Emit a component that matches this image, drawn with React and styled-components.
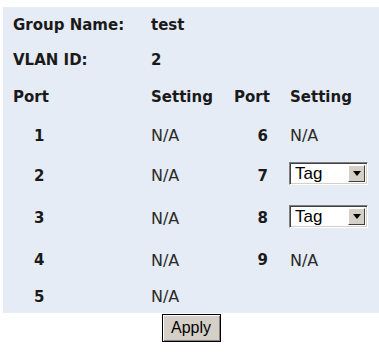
import React from "react";
import styled, { createGlobalStyle } from "styled-components";

const GlobalStyle = createGlobalStyle`
  html, body {
    margin: 0;
    padding: 0;
    background: #ffffff;
  }
`;

const rows = [
  { left: 1, right: 6, setting: null },
  { left: 2, right: 7, setting: "Tag" },
  { left: 3, right: 8, setting: "Tag" },
  { left: 4, right: 9, setting: null },
  { left: 5, right: null, setting: null },
];

export default function App() {
  return (
    <Page>
      <GlobalStyle />
      <Panel>
        <Label>Group Name:</Label>
        <Value>test</Value>
        <Label>VLAN ID:</Label>
        <Value>2</Value>

        <Label>Port</Label>
        <Head>Setting</Head>
        <Head>Port</Head>
        <Head>Setting</Head>

        {rows.map((r) => (
          <React.Fragment key={r.left}>
            <PortNum>{r.left}</PortNum>
            <NA>N/A</NA>
            <PortNum $right>{r.right}</PortNum>
            <Cell>
              {r.right === null ? null : r.setting ? (
                <SelectBox>
                  <Select defaultValue={r.setting}>
                    <option>Tag</option>
                    <option>Untag</option>
                  </Select>
                  <ArrowButton>
                    <svg width="8" height="5" viewBox="0 0 8 5">
                      <path d="M0 0h8L4 5z" fill="#000" />
                    </svg>
                  </ArrowButton>
                </SelectBox>
              ) : (
                <NA>N/A</NA>
              )}
            </Cell>
          </React.Fragment>
        ))}
      </Panel>
      <Footer>
        <ApplyButton>Apply</ApplyButton>
      </Footer>
    </Page>
  );
}

const Page = styled.div`
  padding: 7px 0 0 3px;
  width: 379px;
  box-sizing: border-box;
`;

const Panel = styled.div`
  display: grid;
  grid-template-columns: 148px 83px 56px 1fr;
  grid-template-rows: 35px 36px 38px 39px 41px 44px 40px 33px;
  background: #e6ecf5;
  font-family: "DejaVu Sans", Verdana, sans-serif;
`;

const Cell = styled.div`
  display: flex;
  align-items: center;
`;

const Label = styled(Cell)`
  padding-left: 10px;
  font-size: 15px;
  font-weight: bold;
  color: #1a1a1a;
`;

const Value = styled(Cell)`
  grid-column: span 3;
  font-size: 15px;
  font-weight: bold;
  color: #1a1a1a;
`;

const Head = styled(Cell)`
  font-size: 15px;
  font-weight: bold;
  color: #1a1a1a;
`;

const PortNum = styled(Cell)`
  font-size: 15px;
  font-weight: bold;
  color: #1a1a1a;
  justify-content: ${(p) => (p.$right ? "flex-end" : "flex-start")};
  padding: ${(p) => (p.$right ? "0 22px 0 0" : "0 0 0 31px")};
`;

const NA = styled(Cell)`
  font-size: 16px;
  color: #2a2a2a;
`;

const SelectBox = styled.div`
  display: flex;
  width: 79px;
  height: 23px;
  box-sizing: border-box;
  margin: 0 0 4px -1px;
  background: #ffffff;
  border-top: 1px solid #808080;
  border-left: 1px solid #808080;
  border-right: 1px solid #ffffff;
  border-bottom: 1px solid #ffffff;
  box-shadow: inset 1px 1px 0 #404040, inset -1px -1px 0 #d4d0c8;
  padding: 2px;
`;

const Select = styled.select`
  appearance: none;
  flex: 1 1 auto;
  width: 0;
  min-width: 0;
  border: none;
  outline: none;
  background: transparent;
  font-family: "Liberation Sans", Arial, sans-serif;
  font-size: 17px;
  color: #000;
  padding: 0 0 0 3px;
  margin: 0;
  line-height: 17px;
`;

const ArrowButton = styled.span`
  display: flex;
  flex: 0 0 17px;
  align-items: center;
  justify-content: center;
  box-sizing: border-box;
  background: #d4d0c8;
  border-top: 1px solid #ffffff;
  border-left: 1px solid #ffffff;
  border-right: 1px solid #404040;
  border-bottom: 1px solid #404040;
`;

const Footer = styled.div`
  display: flex;
  justify-content: center;
  padding-top: 1px;
`;

const ApplyButton = styled.button`
  width: 59px;
  height: 28px;
  box-sizing: border-box;
  background: #d4d0c8;
  border: 1px solid #000;
  box-shadow: inset 1px 1px 0 #ffffff, inset -1px -1px 0 #808080;
  font-family: "Liberation Sans", Arial, sans-serif;
  font-size: 16px;
  color: #000;
  padding: 0;
`;
